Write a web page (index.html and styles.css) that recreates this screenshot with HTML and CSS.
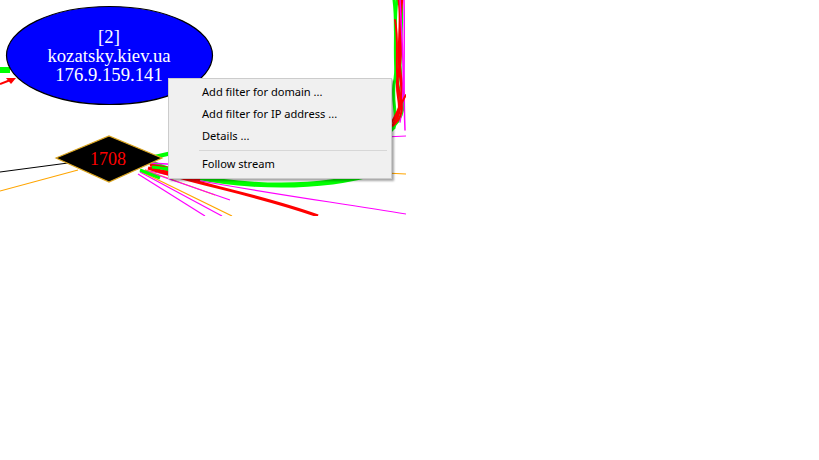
FILE: index.html
```html
<!DOCTYPE html>
<html>
<head>
<meta charset="utf-8">
<link rel="stylesheet" href="styles.css">
</head>
<body>
<div class="stage">
  <svg class="graph" width="406" height="216" viewBox="0 0 406 216">
    <!-- right vertical bundle -->
    <g fill="none" stroke-linecap="round">
      <path d="M394,0 C398,30 392,60 399,90 C402,110 396,120 392,130" stroke="#00ff00" stroke-width="3"/>
      <path d="M397,0 C392,35 400,55 394,85 C392,105 398,115 394,128" stroke="#00ff00" stroke-width="3"/>
      <path d="M401,0 C404,30 396,60 403,95 C405,110 400,120 394,126" stroke="#00ff00" stroke-width="3"/>
      <path d="M399,0 C403,25 396,50 401,80 C404,100 398,118 393,125" stroke="#ff0000" stroke-width="3"/>
      <path d="M402,0 C398,30 404,55 398,75 C394,95 404,105 396,118" stroke="#ff0000" stroke-width="2.5"/>
      <path d="M404,0 C405,40 403,80 405,130" stroke="#ff00ff" stroke-width="1.5"/>
      <path d="M400,0 C402,40 406,90 400,122" stroke="#ff00ff" stroke-width="1.5"/>
      <path d="M395,20 C400,45 393,70 401,100 C404,112 399,122 392,126" stroke="#ff0000" stroke-width="2"/>
      <path d="M406,95 C400,105 396,115 392,122" stroke="#ff0000" stroke-width="2"/>
    </g>
    <!-- short edges at right of menu -->
    <line x1="385" y1="137" x2="406" y2="136" stroke="#ff00ff" stroke-width="1.2"/>
    <line x1="385" y1="173" x2="406" y2="174" stroke="#ffa500" stroke-width="1.2"/>
    <!-- edges fanning from diamond -->
    <g fill="none">
      <path d="M150,162 C200,185 300,195 380,172" stroke="#00ff00" stroke-width="5"/>
      <path d="M145,170 C210,185 320,200 406,214" stroke="#ff00ff" stroke-width="1.2"/>
      <path d="M148,168 C200,185 260,195 318,216" stroke="#ff0000" stroke-width="3"/>
      <path d="M140,172 L222,216" stroke="#ff00ff" stroke-width="1.2"/>
      <path d="M142,172 L232,216" stroke="#ffa500" stroke-width="1.2"/>
      <path d="M138,174 L205,216" stroke="#ff00ff" stroke-width="1.2"/>
      <path d="M145,170 L215,195" stroke="#ffa500" stroke-width="1.2"/>
      <path d="M146,171 L230,200" stroke="#ff00ff" stroke-width="1.2"/>
      <path d="M150,165 L200,174" stroke="#ff0000" stroke-width="3"/>
      <path d="M150,168 L200,180" stroke="#ff0000" stroke-width="2.5"/>
      <path d="M150,163 L200,166" stroke="#ff00ff" stroke-width="1.5"/>
      <path d="M150,158 L185,150" stroke="#00ff00" stroke-width="4"/>
      <path d="M152,167 L180,170" stroke="#00ff00" stroke-width="3"/>
      <path d="M140,170 L160,178" stroke="#00ff00" stroke-width="3"/>
    </g>
    <!-- left edges -->
    <line x1="0" y1="172" x2="68" y2="163" stroke="#000" stroke-width="1"/>
    <line x1="0" y1="191" x2="78" y2="170" stroke="#ffa500" stroke-width="1.2"/>
    <path d="M0,70 L10,70" stroke="#00ff00" stroke-width="6" fill="none"/>
    <path d="M0,84 L13,79" stroke="#ff0000" stroke-width="2" fill="none"/>
    <path d="M16,78 L6,78 L11,84 Z" fill="#ff0000"/>
    <!-- domain node -->
    <ellipse cx="109.5" cy="55.5" rx="103" ry="49" fill="#0000ff" stroke="#000" stroke-width="1.2"/>
    <text class="nodetext" x="109" y="43">[2]</text>
    <text class="nodetext" x="109" y="62">kozatsky.kiev.ua</text>
    <text class="nodetext" x="109" y="81">176.9.159.141</text>
    <!-- stream node -->
    <polygon points="56,158 109,136 162,158 109,182" fill="#000" stroke="#daa520" stroke-width="1.2"/>
    <text class="diamondtext" x="108" y="165">1708</text>
  </svg>
  <div class="menu">
    <div class="item">Add filter for domain ...</div>
    <div class="item">Add filter for IP address ...</div>
    <div class="item">Details ...</div>
    <div class="sep"></div>
    <div class="item">Follow stream</div>
  </div>
</div>
</body>
</html>
```
FILE: styles.css
```css
html, body {
  margin: 0;
  padding: 0;
  background: #ffffff;
  width: 819px;
  height: 460px;
  overflow: hidden;
}
.stage {
  position: relative;
  width: 819px;
  height: 460px;
}
.graph {
  display: block;
}
.nodetext {
  font-family: "Liberation Serif", "Times New Roman", serif;
  font-size: 18.7px;
  fill: #ffffff;
  text-anchor: middle;
}
.diamondtext {
  font-family: "Liberation Serif", "Times New Roman", serif;
  font-size: 18px;
  fill: #ff0000;
  text-anchor: middle;
}
.menu {
  position: absolute;
  left: 168px;
  top: 78px;
  width: 218px;
  padding: 2px 2px 3px 2px;
  background: #f0f0f0;
  border: 1px solid #cccccc;
  box-shadow: 2px 2px 2px rgba(0, 0, 0, 0.35);
  font-family: "Noto Sans", "Open Sans", sans-serif;
  font-size: 11.1px;
  color: #000000;
}
.item {
  height: 22px;
  line-height: 22px;
  padding-left: 31px;
  white-space: nowrap;
}
.sep {
  height: 1px;
  background: #d7d7d7;
  margin: 3px 2px 2px 28px;
}
```
